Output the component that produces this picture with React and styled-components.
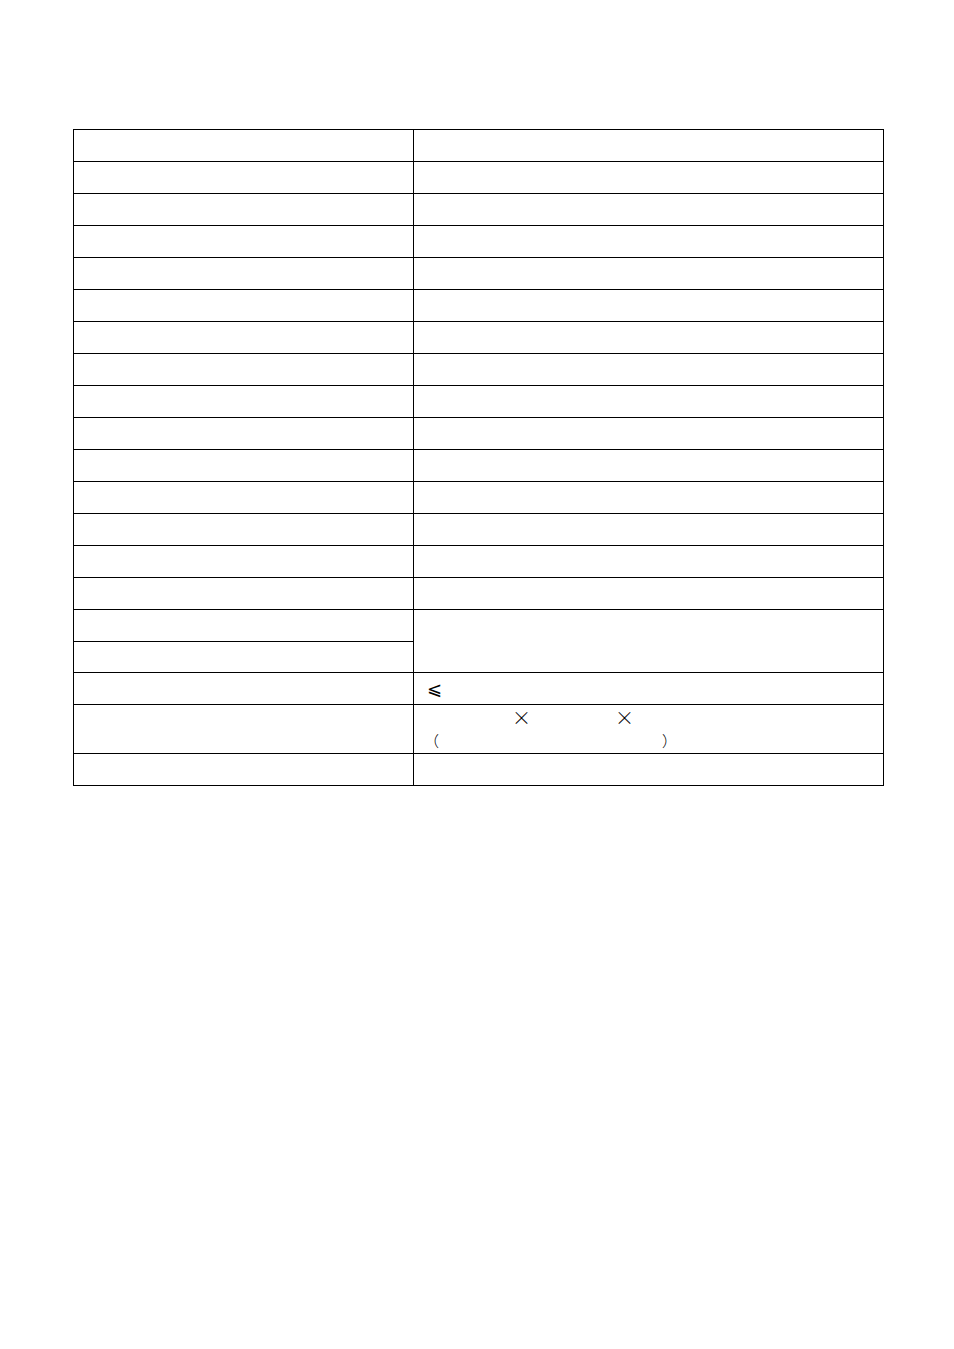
import React from 'react';
import styled, { createGlobalStyle } from 'styled-components';

const GlobalStyle = createGlobalStyle`
  html, body {
    margin: 0;
    padding: 0;
    background: #fff;
  }
  body {
    font-family: "Noto Sans CJK SC", "DejaVu Sans", sans-serif;
    color: #000;
  }
`;

const Page = styled.div`
  width: 954px;
  min-height: 1349px;
  padding: 129px 0 0 73px;
  box-sizing: border-box;
`;

const Table = styled.table`
  border-collapse: separate;
  border-spacing: 0;
  table-layout: fixed;
  width: 811px;
  border-top: 1px solid #000;
  border-left: 1px solid #000;
`;

const Row = styled.tr``;

const Cell = styled.td`
  box-sizing: border-box;
  height: ${(p) => p.$h || 32}px;
  border-right: 1px solid #000;
  border-bottom: 1px solid #000;
  padding: 0 0 0 8px;
  font-size: 14px;
  line-height: 24px;
  vertical-align: middle;
`;

const Line = styled.div`
  display: flex;
  align-items: center;
  height: 24px;
`;

const Spacer = styled.span`
  display: inline-block;
  width: ${(p) => p.$w}px;
  flex: none;
`;

const Mark = styled.span`
  display: inline-block;
  width: ${(p) => p.$box || 14}px;
  text-align: center;
  flex: none;
  font-size: ${(p) => p.$size || 14}px;
  font-family: ${(p) => (p.$math ? '"DejaVu Sans", sans-serif' : '"Noto Sans CJK SC", sans-serif')};
  font-weight: ${(p) => (p.$math ? 200 : 300)};
`;

const LeftCol = styled.col`
  width: 340px;
`;

const plainRows = Array.from({ length: 15 }, (_, i) => i);

export default function App() {
  return (
    <>
      <GlobalStyle />
      <Page>
        <Table>
          <colgroup>
            <LeftCol />
            <col />
          </colgroup>
          <tbody>
            {plainRows.map((i) => (
              <Row key={i}>
                <Cell />
                <Cell />
              </Row>
            ))}
            <Row>
              <Cell />
              <Cell rowSpan={2} $h={63} />
            </Row>
            <Row>
              <Cell $h={31} />
            </Row>
            <Row>
              <Cell />
              <Cell>
                <Line>
                  <Spacer $w={3} />
                  <Mark $math $size={18} $box={18}>⩽</Mark>
                </Line>
              </Cell>
            </Row>
            <Row>
              <Cell $h={48} />
              <Cell $h={48}>
                <Line>
                  <Spacer $w={90} />
                  <Mark $size={19} $box={18}>×</Mark>
                  <Spacer $w={85} />
                  <Mark $size={19} $box={18}>×</Mark>
                </Line>
                <Line>
                  <Spacer $w={2} />
                  <Mark $size={15}>（</Mark>
                  <Spacer $w={224} />
                  <Mark $size={15}>）</Mark>
                </Line>
              </Cell>
            </Row>
            <Row>
              <Cell />
              <Cell />
            </Row>
          </tbody>
        </Table>
      </Page>
    </>
  );
}
